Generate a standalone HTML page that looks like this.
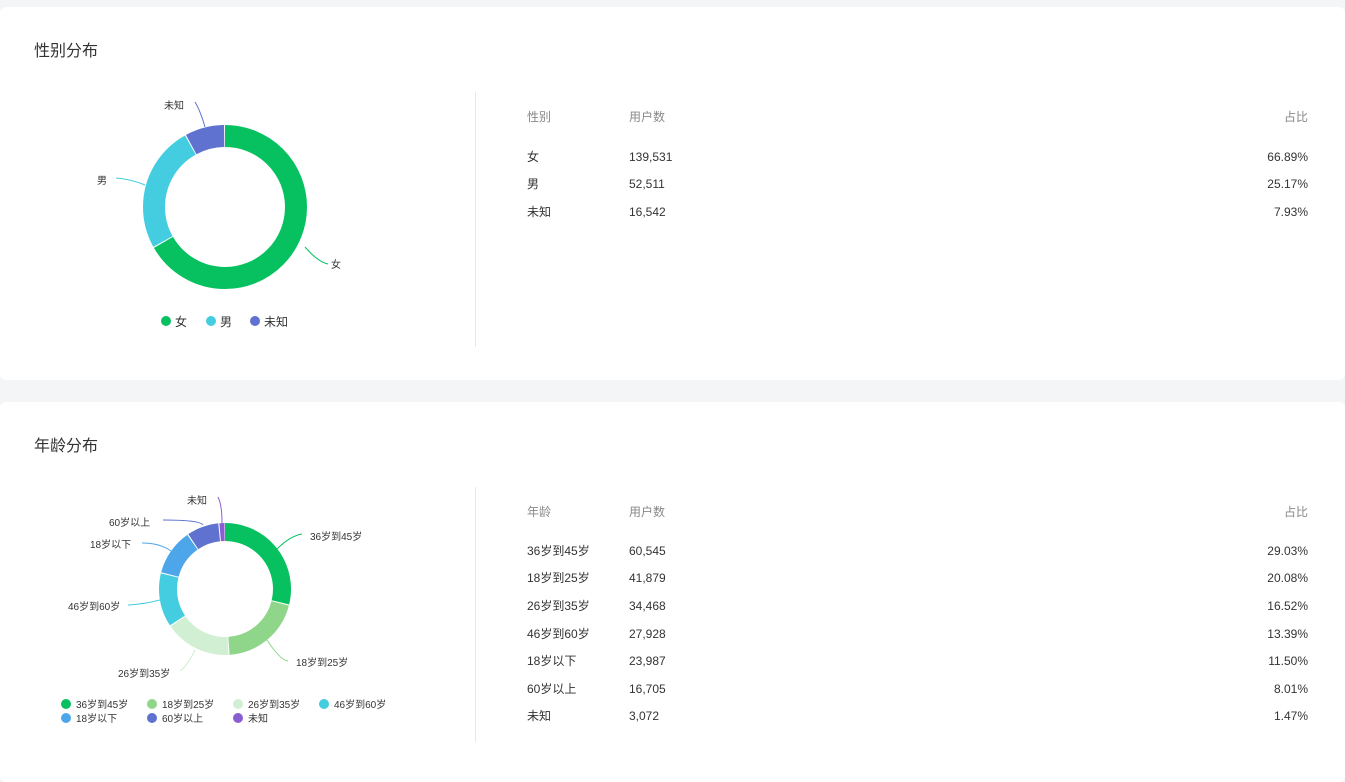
<!DOCTYPE html>
<html><head><meta charset="utf-8"><style>
*{margin:0;padding:0;box-sizing:border-box}
body{width:1345px;height:762px;background:#f4f5f7;font-family:"Liberation Sans","Noto Sans CJK SC",sans-serif;color:#333;position:relative;overflow:hidden}
.card{position:absolute;left:0;width:1345px;background:#fff;border-radius:6px}
.t{position:absolute;font-size:16px;color:#333;line-height:20px}
.div{position:absolute;left:475px;width:1px;background:#e8e8e8}
.tx{position:absolute;font-size:12px;color:#333;white-space:nowrap;line-height:16px;height:16px}
.h{color:#888}
.r{text-align:right;width:100px;left:1208px}
svg{position:absolute;left:0;top:0}
</style></head><body>
<div class="card" style="top:7px;height:373px"></div>
<div class="card" style="top:402px;height:380px"></div>
<div class="t" style="left:34px;top:42px">性别分布</div>
<div class="t" style="left:34px;top:437px">年龄分布</div>
<div class="div" style="top:92px;height:255px"></div>
<div class="div" style="top:487px;height:255px"></div>

<svg width="475" height="762" viewBox="0 0 475 762">
<g transform="rotate(-90 225 207)" fill="none" stroke-width="22">
<circle cx="225" cy="207" r="71" stroke="#07c160" stroke-dasharray="297.4 500" stroke-dashoffset="0"/>
<circle cx="225" cy="207" r="71" stroke="#44cde0" stroke-dasharray="111.3 500" stroke-dashoffset="-298.4"/>
<circle cx="225" cy="207" r="71" stroke="#5f72d0" stroke-dasharray="34.4 500" stroke-dashoffset="-410.7"/>
</g>
<g fill="none" stroke-width="1">
<path d="M305 247 Q318 262 328 264" stroke="#07c160"/>
<path d="M145 185 Q130 179 116 178" stroke="#44cde0"/>
<path d="M205 127 Q200 110 195 102" stroke="#5f72d0"/>
</g>
<g font-size="10" fill="#333" font-family="Liberation Sans,Noto Sans CJK SC,sans-serif">
<text x="331" y="268">女</text><text x="97" y="184">男</text><text x="164" y="109">未知</text>
</g>
<g font-size="12" fill="#333" font-family="Liberation Sans,Noto Sans CJK SC,sans-serif">
<circle cx="166" cy="321" r="5" fill="#07c160"/><text x="175" y="326">女</text>
<circle cx="211" cy="321" r="5" fill="#44cde0"/><text x="220" y="326">男</text>
<circle cx="255" cy="321" r="5" fill="#5f72d0"/><text x="264" y="326">未知</text>
</g>

<g transform="rotate(-90 225 589)" fill="none" stroke-width="18">
<circle cx="225" cy="589" r="57" stroke="#07c160" stroke-dasharray="102.96 500" stroke-dashoffset="0"/>
<circle cx="225" cy="589" r="57" stroke="#8fd68a" stroke-dasharray="70.91 500" stroke-dashoffset="-103.96"/>
<circle cx="225" cy="589" r="57" stroke="#d0efd3" stroke-dasharray="58.16 500" stroke-dashoffset="-175.87"/>
<circle cx="225" cy="589" r="57" stroke="#44cde0" stroke-dasharray="46.95 500" stroke-dashoffset="-235.03"/>
<circle cx="225" cy="589" r="57" stroke="#4ea6ea" stroke-dasharray="40.18 500" stroke-dashoffset="-282.98"/>
<circle cx="225" cy="589" r="57" stroke="#5f72d0" stroke-dasharray="27.68 500" stroke-dashoffset="-324.16"/>
<circle cx="225" cy="589" r="57" stroke="#8a5ed0" stroke-dasharray="4.5 500" stroke-dashoffset="-352.84"/>
</g>
<g fill="none" stroke-width="1">
<path d="M277 549 Q290 536 302 534" stroke="#07c160"/>
<path d="M267 640 Q280 660 288 661" stroke="#8fd68a"/>
<path d="M195 650 Q188 665 180 671" stroke="#d0efd3"/>
<path d="M160 600 Q145 604 128 605" stroke="#44cde0"/>
<path d="M171 551 Q160 543 142 543" stroke="#4ea6ea"/>
<path d="M203 525 Q200 520 163 520" stroke="#5f72d0"/>
<path d="M222 523 Q222 505 218 497" stroke="#8a5ed0"/>
</g>
<g font-size="10" fill="#333" font-family="Liberation Sans,Noto Sans CJK SC,sans-serif">
<text x="310" y="540">36岁到45岁</text><text x="296" y="666">18岁到25岁</text><text x="118" y="677">26岁到35岁</text>
<text x="68" y="610">46岁到60岁</text><text x="90" y="548">18岁以下</text><text x="109" y="526">60岁以上</text><text x="187" y="504">未知</text>
</g>
<g font-size="10" fill="#333" font-family="Liberation Sans,Noto Sans CJK SC,sans-serif">
<circle cx="66" cy="704" r="5" fill="#07c160"/><text x="76" y="708">36岁到45岁</text>
<circle cx="152" cy="704" r="5" fill="#8fd68a"/><text x="162" y="708">18岁到25岁</text>
<circle cx="238" cy="704" r="5" fill="#d0efd3"/><text x="248" y="708">26岁到35岁</text>
<circle cx="324" cy="704" r="5" fill="#44cde0"/><text x="334" y="708">46岁到60岁</text>
<circle cx="66" cy="718" r="5" fill="#4ea6ea"/><text x="76" y="722">18岁以下</text>
<circle cx="152" cy="718" r="5" fill="#5f72d0"/><text x="162" y="722">60岁以上</text>
<circle cx="238" cy="718" r="5" fill="#8a5ed0"/><text x="248" y="722">未知</text>
</g>
</svg>

<div class="tx h" style="left:527px;top:109px">性别</div><div class="tx h" style="left:629px;top:109px">用户数</div><div class="tx h r" style="top:109px">占比</div>
<div class="tx" style="left:527px;top:149px">女</div><div class="tx" style="left:629px;top:149px">139,531</div><div class="tx r" style="top:149px">66.89%</div>
<div class="tx" style="left:527px;top:176px">男</div><div class="tx" style="left:629px;top:176px">52,511</div><div class="tx r" style="top:176px">25.17%</div>
<div class="tx" style="left:527px;top:204px">未知</div><div class="tx" style="left:629px;top:204px">16,542</div><div class="tx r" style="top:204px">7.93%</div>

<div class="tx h" style="left:527px;top:504px">年龄</div><div class="tx h" style="left:629px;top:504px">用户数</div><div class="tx h r" style="top:504px">占比</div>
<div class="tx" style="left:527px;top:543px">36岁到45岁</div><div class="tx" style="left:629px;top:543px">60,545</div><div class="tx r" style="top:543px">29.03%</div>
<div class="tx" style="left:527px;top:570px">18岁到25岁</div><div class="tx" style="left:629px;top:570px">41,879</div><div class="tx r" style="top:570px">20.08%</div>
<div class="tx" style="left:527px;top:598px">26岁到35岁</div><div class="tx" style="left:629px;top:598px">34,468</div><div class="tx r" style="top:598px">16.52%</div>
<div class="tx" style="left:527px;top:626px">46岁到60岁</div><div class="tx" style="left:629px;top:626px">27,928</div><div class="tx r" style="top:626px">13.39%</div>
<div class="tx" style="left:527px;top:653px">18岁以下</div><div class="tx" style="left:629px;top:653px">23,987</div><div class="tx r" style="top:653px">11.50%</div>
<div class="tx" style="left:527px;top:681px">60岁以上</div><div class="tx" style="left:629px;top:681px">16,705</div><div class="tx r" style="top:681px">8.01%</div>
<div class="tx" style="left:527px;top:708px">未知</div><div class="tx" style="left:629px;top:708px">3,072</div><div class="tx r" style="top:708px">1.47%</div>
</body></html>
